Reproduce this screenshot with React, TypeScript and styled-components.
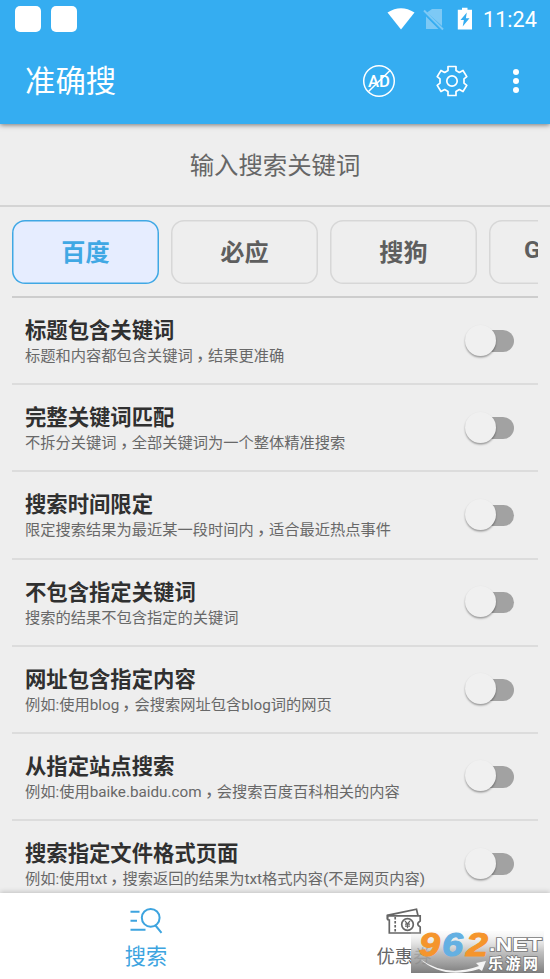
import React from "react";
import styled, { createGlobalStyle } from "styled-components";

const GlobalStyle = createGlobalStyle`
  * { box-sizing: border-box; }
  body { margin: 0; background: #eeeeee; overflow: hidden; }
`;

const Screen = styled.div`
  position: relative;
  width: 550px;
  height: 979px;
  display: flex;
  flex-direction: column;
  overflow: hidden;
  background: #eeeeee;
  font-family: Roboto, "Noto Sans CJK SC", sans-serif;
  white-space: nowrap;
`;

const Header = styled.header`
  flex: none;
  height: 124px;
  background: #35adf1;
  color: #fff;
  box-shadow: 0 1px 5px rgba(0, 0, 0, 0.5);
`;

const StatusBar = styled.div`
  height: 38px;
  display: flex;
  align-items: center;
  padding: 0 12px 0 15px;
`;

const Notice = styled.span`
  width: 26px;
  height: 26px;
  border-radius: 5px;
  background: #fff;
  margin-right: 10px;
`;

const StatusIcons = styled.svg`
  margin-left: auto;
  display: block;
`;

const Clock = styled.span`
  width: 55px;
  margin-left: 10px;
  margin-top: 2px;
  font-size: 21.6px;
  line-height: 24px;
`;

const Toolbar = styled.div`
  height: 86px;
  display: flex;
  align-items: center;
  padding: 0 30px 0 25px;
`;

const AppTitle = styled.h1`
  margin: 0 auto 0 0;
  padding-top: 2px;
  font-size: 30.4px;
  line-height: 40px;
  font-weight: 400;
`;

const AdIcon = styled.svg`
  margin-right: 40px;
`;

const GearIcon = styled.svg`
  margin-right: 44px;
`;

const MoreDots = styled.div`
  width: 8px;
  display: grid;
  gap: 2.8px;
  i { width: 6.4px; height: 6.4px; border-radius: 50%; background: #fff; margin-left: 1px; }
`;

const SearchField = styled.div`
  flex: none;
  height: 83px;
  display: flex;
  justify-content: center;
  align-items: center;
  padding-bottom: 3px;
  border-bottom: 2px solid #d4d4d4;
  font-size: 24.4px;
  color: #666;
`;

const Engines = styled.div`
  flex: none;
  margin: 0 12px;
  height: 91px;
  padding-top: 13px;
  display: flex;
  gap: 12px;
  overflow: hidden;
  border-bottom: 2px solid #cdcdcd;
`;

const Engine = styled.button<{ $active?: boolean }>`
  flex: none;
  width: 147px;
  height: 64px;
  padding: 0 0 4px;
  border: none;
  box-shadow: inset 0 0 0 1.5px ${(p) => (p.$active ? "#40a8e4" : "#d7d7d7")};
  border-radius: 13px;
  background: ${(p) => (p.$active ? "#e6edff" : "#eeeeee")};
  color: ${(p) => (p.$active ? "#40a8e4" : "#5e5e5e")};
  font: 700 24.2px Roboto, "Noto Sans CJK SC", sans-serif;
`;

const Options = styled.div`
  flex: 1;
  min-height: 0;
  overflow: hidden;
  padding: 0 12px;
`;

const Row = styled.div`
  height: 87.2px;
  display: flex;
  justify-content: space-between;
  padding: 19px 23px 0 13px;
  border-bottom: 2px solid #dcdcdc;
`;

const RowTitle = styled.div`
  font-size: 21.35px;
  line-height: 28px;
  font-weight: 700;
  color: #303030;
`;

const RowNote = styled.div`
  font-size: 15.25px;
  line-height: 22px;
  color: #686868;
`;

const Comma = styled.span`
  font-family: "Noto Sans CJK TC", sans-serif;
  display: inline-block;
  line-height: 1;
  transform: translate(-0.5px, 4px) scale(1.2);
`;

const Switch = styled.div`
  width: 50px;
  height: 33px;
  margin-top: 8px;
  display: flex;
  align-items: center;
`;

const Thumb = styled.span`
  flex: none;
  width: 31px;
  height: 31px;
  margin-top: -3px;
  border-radius: 50%;
  background: #f0f0f0;
  box-shadow: 0 1.5px 2px rgba(0, 0, 0, 0.36);
  z-index: 1;
`;

const Track = styled.span`
  width: 38px;
  height: 21.5px;
  margin-left: -20px;
  margin-top: -1px;
  border-radius: 11px;
  background: #a2a2a2;
`;

const BottomNav = styled.nav`
  flex: none;
  height: 86px;
  padding: 0 17px;
  display: grid;
  grid-template-columns: 1fr 1fr;
  background: #fff;
  box-shadow: 0 -1px 5px rgba(0, 0, 0, 0.2);
  z-index: 2;
`;

const Tab = styled.div<{ $active?: boolean }>`
  display: flex;
  flex-direction: column;
  align-items: center;
  padding-top: 12px;
  color: ${(p) => (p.$active ? "#3da4df" : "#666")};
  font-size: ${(p) => (p.$active ? "21.2px" : "18.3px")};
  line-height: 32px;
`;

const TabIcon = styled.svg`
  flex: none;
  margin-bottom: 4px;
`;

const Watermark = styled.svg`
  position: absolute;
  left: 411px;
  top: 929px;
  z-index: 3;
`;

const engines = ["百度", "必应", "搜狗", "Google"];

const options: [string, string][] = [
  ["标题包含关键词", "标题和内容都包含关键词，结果更准确"],
  ["完整关键词匹配", "不拆分关键词，全部关键词为一个整体精准搜索"],
  ["搜索时间限定", "限定搜索结果为最近某一段时间内，适合最近热点事件"],
  ["不包含指定关键词", "搜索的结果不包含指定的关键词"],
  ["网址包含指定内容", "例如:使用blog，会搜索网址包含blog词的网页"],
  ["从指定站点搜索", "例如:使用baike.baidu.com，会搜索百度百科相关的内容"],
  ["搜索指定文件格式页面", "例如:使用txt，搜索返回的结果为txt格式内容(不是网页内容)"],
];

function Note({ text }: { text: string }) {
  const parts = text.split("，");
  return (
    <RowNote>
      {parts.map((part, i) => (
        <React.Fragment key={i}>
          {i > 0 && <Comma lang="zh-TW">，</Comma>}
          {part}
        </React.Fragment>
      ))}
    </RowNote>
  );
}

export default function App() {
  return (
    <Screen lang="zh-CN">
      <GlobalStyle />
      <Header>
        <StatusBar>
          <Notice />
          <Notice />
          <StatusIcons width="86" height="24" viewBox="0 0 86 24">
            <path d="M0.5 5.5Q14 -3 27.5 5.5L14 22.5Z" fill="#fff" />
            <path d="M45 2h10v17L40 5.5ZM39 9.5 51.5 22H39Z" fill="#7dc9f5" />
            <path d="M37 3.5 56 22.5" stroke="#7dc9f5" strokeWidth="2" />
            <path d="M75 .7h5.5v2H85V22.5H70.8V2.7H75Z" fill="#fff" />
            <path d="M79.8 5.5 73.5 13h3.4l-1.2 6.4 6.8-8.2h-3.6Z" fill="#35adf1" />
          </StatusIcons>
          <Clock>11:24</Clock>
        </StatusBar>
        <Toolbar>
          <AppTitle>准确搜</AppTitle>
          <AdIcon width="34" height="34" viewBox="0 0 34 34" fill="none" stroke="#fff">
            <circle cx="17" cy="17" r="15.3" strokeWidth="1.5" />
            <text x="6" y="22.8" fill="#fff" stroke="none" fontFamily="Roboto" fontWeight="500" fontSize="16.5" textLength="22" lengthAdjust="spacingAndGlyphs">AD</text>
            <path d="M6.5 27.5 28.5 6" strokeWidth="1.5" />
          </AdIcon>
          <GearIcon width="32" height="32" viewBox="0 0 32 32" fill="none" stroke="#fff" strokeWidth="1.7" strokeLinejoin="round">
            <path d="M12 1.5h8v4.1l3.3 1.9 3.7-2 3.8 6.1L28 13.8v4.4l2.8 2.2L27 26.5l-3.7-2-3.3 1.9v4.1h-8v-4.1l-3.3-1.9-3.7 2-3.8-6.1L4 18.2v-4.4l-2.8-2.2L5 5.5l3.7 2L12 5.6Z" />
            <circle cx="16" cy="16" r="5.2" />
          </GearIcon>
          <MoreDots><i /><i /><i /></MoreDots>
        </Toolbar>
      </Header>
      <SearchField>输入搜索关键词</SearchField>
      <Engines>
        {engines.map((name, i) => (
          <Engine key={name} $active={i === 0}>{name}</Engine>
        ))}
      </Engines>
      <Options>
        {options.map(([title, note]) => (
          <Row key={title}>
            <div>
              <RowTitle>{title}</RowTitle>
              <Note text={note} />
            </div>
            <Switch><Thumb /><Track /></Switch>
          </Row>
        ))}
      </Options>
      <BottomNav>
        <Tab $active>
          <TabIcon width="34" height="32" viewBox="0 0 34 32" fill="none" stroke="currentColor" strokeWidth="2">
            <path d="M1.5 6.8h9M1.5 15.8h6.5M1.5 24.7h15M26.5 20.5l6 7.3" />
            <circle cx="21.7" cy="12.8" r="8.9" />
          </TabIcon>
          搜索
        </Tab>
        <Tab>
          <TabIcon width="36" height="32" viewBox="0 0 36 32" fill="none" stroke="currentColor" strokeWidth="1.7">
            <path d="M1.5 14.5V10.3L30.5 4.2l1.4 6" />
            <path d="M1.5 10.8H34.2v5.2q-5 3 0 6v6H3.3v-13q-1.8 0-1.8-1Z" />
            <path d="M9.2 12v15" strokeDasharray="2.4 1.6" />
            <circle cx="21.5" cy="19.5" r="5.8" />
            <path d="M19 16l2.5 2.8L24 16M21.5 18.5v4.8M19 19.2h5M19 21.2h5" strokeWidth="1.2" />
          </TabIcon>
          优惠券
        </Tab>
      </BottomNav>
      <Watermark width="134" height="45" viewBox="0 0 134 45">
        <defs>
          <linearGradient id="shade" x1="0" y1="0" x2="0" y2="1">
            <stop offset="0" stopColor="#e8e8e8" stopOpacity="0.1" />
            <stop offset="0.5" stopColor="#b5b5b5" stopOpacity="0.85" />
            <stop offset="1" stopColor="#777" stopOpacity="0.95" />
          </linearGradient>
        </defs>
        <rect y="2" width="133" height="42" fill="url(#shade)" />
        <path d="M9 30Q35 49 68 37l-3-3 10-2-4 10-3-2Q32 51 9 30Z" fill="#f5f5f5" />
        <g fontFamily="Liberation Sans" fontWeight="700" fontStyle="italic" fontSize="33" strokeWidth="1" strokeLinejoin="round">
          <text x="8" y="27" fill="#f5952c" stroke="#f5952c" textLength="21" lengthAdjust="spacingAndGlyphs">9</text>
          <text x="31" y="27" fill="#64b0e2" stroke="#64b0e2" textLength="21" lengthAdjust="spacingAndGlyphs">6</text>
          <text x="55" y="27" fill="#f5952c" stroke="#f5952c" textLength="22" lengthAdjust="spacingAndGlyphs">2</text>
        </g>
        <g fill="#fff" stroke="#777" strokeWidth="1.6" paintOrder="stroke" fontWeight="700">
          <text x="78" y="21.5" fontFamily="Liberation Sans" fontSize="19" textLength="53" lengthAdjust="spacingAndGlyphs">.NET</text>
          <text x="77" y="39.5" fontFamily="Noto Sans CJK SC" fontSize="15" textLength="50">乐游网</text>
        </g>
      </Watermark>
    </Screen>
  );
}
